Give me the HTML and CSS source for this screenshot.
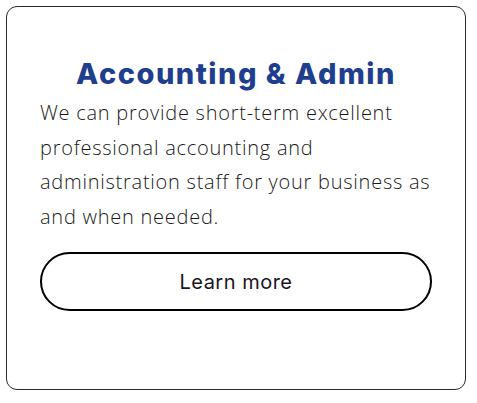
FILE: index.html
```html
<!DOCTYPE html>
<html lang="en">
<head>
<meta charset="utf-8">
<title>Accounting &amp; Admin</title>
<link rel="stylesheet" href="styles.css">
</head>
<body>
  <div class="card">
    <h2 class="card-title">Accounting &amp; Admin</h2>
    <p class="card-text">We can provide short-term excellent professional accounting and administration staff for your business as and when needed.</p>
    <a class="btn" href="#">Learn more</a>
  </div>
</body>
</html>
```
FILE: styles.css
```css
html, body {
  margin: 0;
  padding: 0;
  background: #ffffff;
}
body {
  padding: 6px;
}
.card {
  box-sizing: border-box;
  width: 460px;
  height: 384px;
  border: 1px solid #2a2a2a;
  border-radius: 11px;
  padding: 49px 33px 0 33px;
  display: flex;
  flex-direction: column;
}
.card-title {
  margin: 0;
  text-align: center;
  font-family: "Inter", "DejaVu Sans", sans-serif;
  font-weight: 800;
  font-size: 29px;
  letter-spacing: 1.5px;
  line-height: 36px;
  color: #1f3e8e;
}
.card-text {
  margin: 4px 0 0 0;
  font-family: "Open Sans", sans-serif;
  font-weight: 300;
  font-size: 20px;
  letter-spacing: 0.75px;
  line-height: 34.5px;
  color: #1a1a1a;
}
.btn {
  box-sizing: border-box;
  margin-top: 18px;
  height: 59px;
  border: 2px solid #000;
  border-radius: 30px;
  display: flex;
  align-items: center;
  justify-content: center;
  font-family: "Inter", sans-serif;
  font-weight: 400;
  font-size: 20px;
  letter-spacing: 0.5px;
  color: #1a1420;
  text-decoration: none;
}
```
